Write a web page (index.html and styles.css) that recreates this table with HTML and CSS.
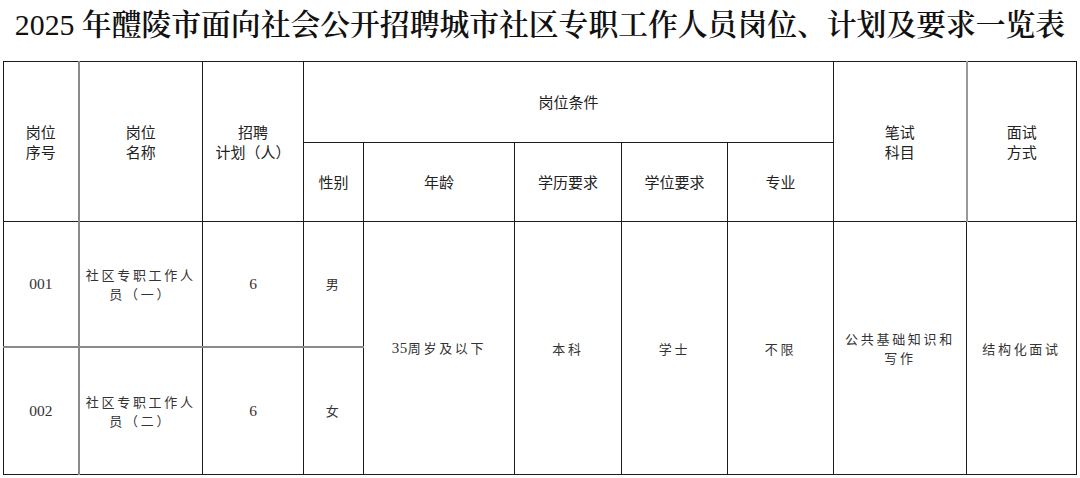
FILE: index.html
```html
<!DOCTYPE html>
<html lang="zh-CN">
<head>
<meta charset="utf-8">
<title>2025年醴陵市面向社会公开招聘城市社区专职工作人员岗位、计划及要求一览表</title>
<link rel="stylesheet" href="styles.css">
</head>
<body>
<h1 class="title"><span class="num">2025</span> 年醴陵市面向社会公开招聘城市社区专职工作人员岗位、计划及要求一览表</h1>
<table class="plan">
  <colgroup>
    <col class="c1"><col class="c2"><col class="c3"><col class="c4"><col class="c5">
    <col class="c6"><col class="c7"><col class="c8"><col class="c9"><col class="c10">
  </colgroup>
  <thead>
    <tr class="r1">
      <th rowspan="2" class="first">岗位<br>序号</th>
      <th rowspan="2">岗位<br>名称</th>
      <th rowspan="2">招聘<br>计划（人）</th>
      <th colspan="5">岗位条件</th>
      <th rowspan="2">笔试<br>科目</th>
      <th rowspan="2" class="grey-left">面试<br>方式</th>
    </tr>
    <tr class="r2">
      <th>性别</th>
      <th>年龄</th>
      <th>学历要求</th>
      <th>学位要求</th>
      <th>专业</th>
    </tr>
  </thead>
  <tbody>
    <tr class="r3">
      <td class="first num">001</td>
      <td class="sp">社区专职工作人<br>员（一）</td>
      <td class="num">6</td>
      <td class="sp">男</td>
      <td rowspan="2" class="sp"><span class="num">35</span>周岁及以下</td>
      <td rowspan="2" class="sp">本科</td>
      <td rowspan="2" class="sp">学士</td>
      <td rowspan="2" class="sp">不限</td>
      <td rowspan="2" class="sp">公共基础知识和<br>写作</td>
      <td rowspan="2" class="sp">结构化面试</td>
    </tr>
    <tr class="r4">
      <td class="first num">002</td>
      <td class="sp">社区专职工作人<br>员（二）</td>
      <td class="num">6</td>
      <td class="sp">女</td>
    </tr>
  </tbody>
</table>
</body>
</html>
```
FILE: styles.css
```css
html, body {
  margin: 0;
  padding: 0;
  background: #ffffff;
}

body {
  width: 1080px;
  height: 478px;
  overflow: hidden;
  font-family: "Noto Sans CJK SC", "Noto Sans", sans-serif;
  color: #222;
}

.title {
  margin: 0;
  padding-top: 7px;
  height: 54px;
  line-height: 36px;
  font-size: 29.8px;
  font-weight: 600;
  text-align: center;
  white-space: nowrap;
  font-family: "Liberation Serif", "Noto Serif CJK SC", "Noto Sans CJK SC", serif;
  color: #111;
  letter-spacing: 0;
}

.title .num {
  font-weight: 400;
}

.plan {
  margin-left: 3px;
  width: 1074px;
  border-collapse: collapse;
  table-layout: fixed;
}

.c1 { width: 75px; }
.c2 { width: 124px; }
.c3 { width: 101px; }
.c4 { width: 60px; }
.c5 { width: 151px; }
.c6 { width: 107px; }
.c7 { width: 106px; }
.c8 { width: 106px; }
.c9 { width: 133px; }
.c10 { width: 110px; }

.plan th,
.plan td {
  border: 1px solid #1c1c1c;
  padding: 0;
  text-align: center;
  vertical-align: middle;
}

.plan th {
  font-size: 15px;
  line-height: 20px;
  font-weight: 400;
  color: #222;
}

.plan td {
  font-size: 13px;
  line-height: 19px;
  color: #333;
}

.plan td.sp {
  letter-spacing: 2.7px;
}

.plan .num {
  font-family: "Liberation Serif", serif;
  font-size: 15.5px;
  letter-spacing: 0;
}

.plan td.sp .num {
  font-size: 15px;
  letter-spacing: 0.5px;
}

.plan .first {
  border-right: 2px solid #8a8a8a;
}

.plan .grey-left {
  border-left: 2px solid #9a9a9a;
}

.r1 { height: 81px; }
.r2 { height: 79px; }
.r3 { height: 125px; }
.r4 { height: 128px; }

.r4 td {
  border-top: 2px solid #8a8a8a;
}
```
